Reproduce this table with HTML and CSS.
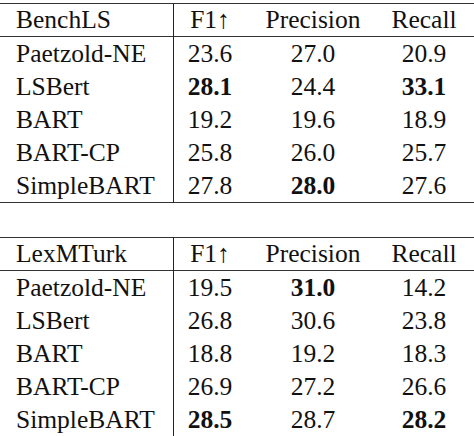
FILE: index.html
```html
<!DOCTYPE html>
<html>
<head>
<meta charset="utf-8">
<link rel="stylesheet" href="styles.css">
</head>
<body>
<table class="res first">
  <thead>
    <tr><th class="name">BenchLS</th><th class="f1">F1↑</th><th class="prec">Precision</th><th class="rec">Recall</th></tr>
  </thead>
  <tbody>
    <tr><td class="name">Paetzold-NE</td><td class="f1">23.6</td><td class="prec">27.0</td><td class="rec">20.9</td></tr>
    <tr><td class="name">LSBert</td><td class="f1"><b>28.1</b></td><td class="prec">24.4</td><td class="rec"><b>33.1</b></td></tr>
    <tr><td class="name">BART</td><td class="f1">19.2</td><td class="prec">19.6</td><td class="rec">18.9</td></tr>
    <tr><td class="name">BART-CP</td><td class="f1">25.8</td><td class="prec">26.0</td><td class="rec">25.7</td></tr>
    <tr><td class="name">SimpleBART</td><td class="f1">27.8</td><td class="prec"><b>28.0</b></td><td class="rec">27.6</td></tr>
  </tbody>
</table>
<table class="res second">
  <thead>
    <tr><th class="name">LexMTurk</th><th class="f1">F1↑</th><th class="prec">Precision</th><th class="rec">Recall</th></tr>
  </thead>
  <tbody>
    <tr><td class="name">Paetzold-NE</td><td class="f1">19.5</td><td class="prec"><b>31.0</b></td><td class="rec">14.2</td></tr>
    <tr><td class="name">LSBert</td><td class="f1">26.8</td><td class="prec">30.6</td><td class="rec">23.8</td></tr>
    <tr><td class="name">BART</td><td class="f1">18.8</td><td class="prec">19.2</td><td class="rec">18.3</td></tr>
    <tr><td class="name">BART-CP</td><td class="f1">26.9</td><td class="prec">27.2</td><td class="rec">26.6</td></tr>
    <tr><td class="name">SimpleBART</td><td class="f1"><b>28.5</b></td><td class="prec">28.7</td><td class="rec"><b>28.2</b></td></tr>
  </tbody>
</table>
</body>
</html>
```
FILE: styles.css
```css
html, body {
  margin: 0;
  padding: 0;
  background: #fff;
}
body {
  font-family: "Liberation Serif", Tinos, "Times New Roman", "DejaVu Serif", serif;
  font-size: 25.5px;
  color: #111;
}
.res {
  font-family: "Liberation Serif", Tinos, "Times New Roman", "DejaVu Serif", serif;
  border-collapse: collapse;
  width: 474px;
  table-layout: fixed;
  border-top: 1px solid #333;
  border-bottom: 1px solid #333;
}
.first {
  margin-top: 3px;
}
.second {
  margin-top: 34px;
}
.res thead tr {
  border-bottom: 1px solid #333;
}
.res th, .res td {
  font-family: "Liberation Serif", Tinos, "Times New Roman", "DejaVu Serif", serif;
  font-weight: normal;
  height: 32px;
  padding: 0;
  line-height: 32px;
  white-space: nowrap;
}
.res b {
  font-weight: bold;
}
.name {
  width: 157px;
  text-align: left;
  padding-left: 16px !important;
  border-right: 1px solid #222;
}
.f1 {
  width: 72px;
  text-align: center;
}
.prec {
  width: 134px;
  text-align: center;
}
.rec {
  text-align: center;
  padding-right: 6px !important;
}
.res tbody tr td {
  height: 33px;
  line-height: 33px;
}
```
